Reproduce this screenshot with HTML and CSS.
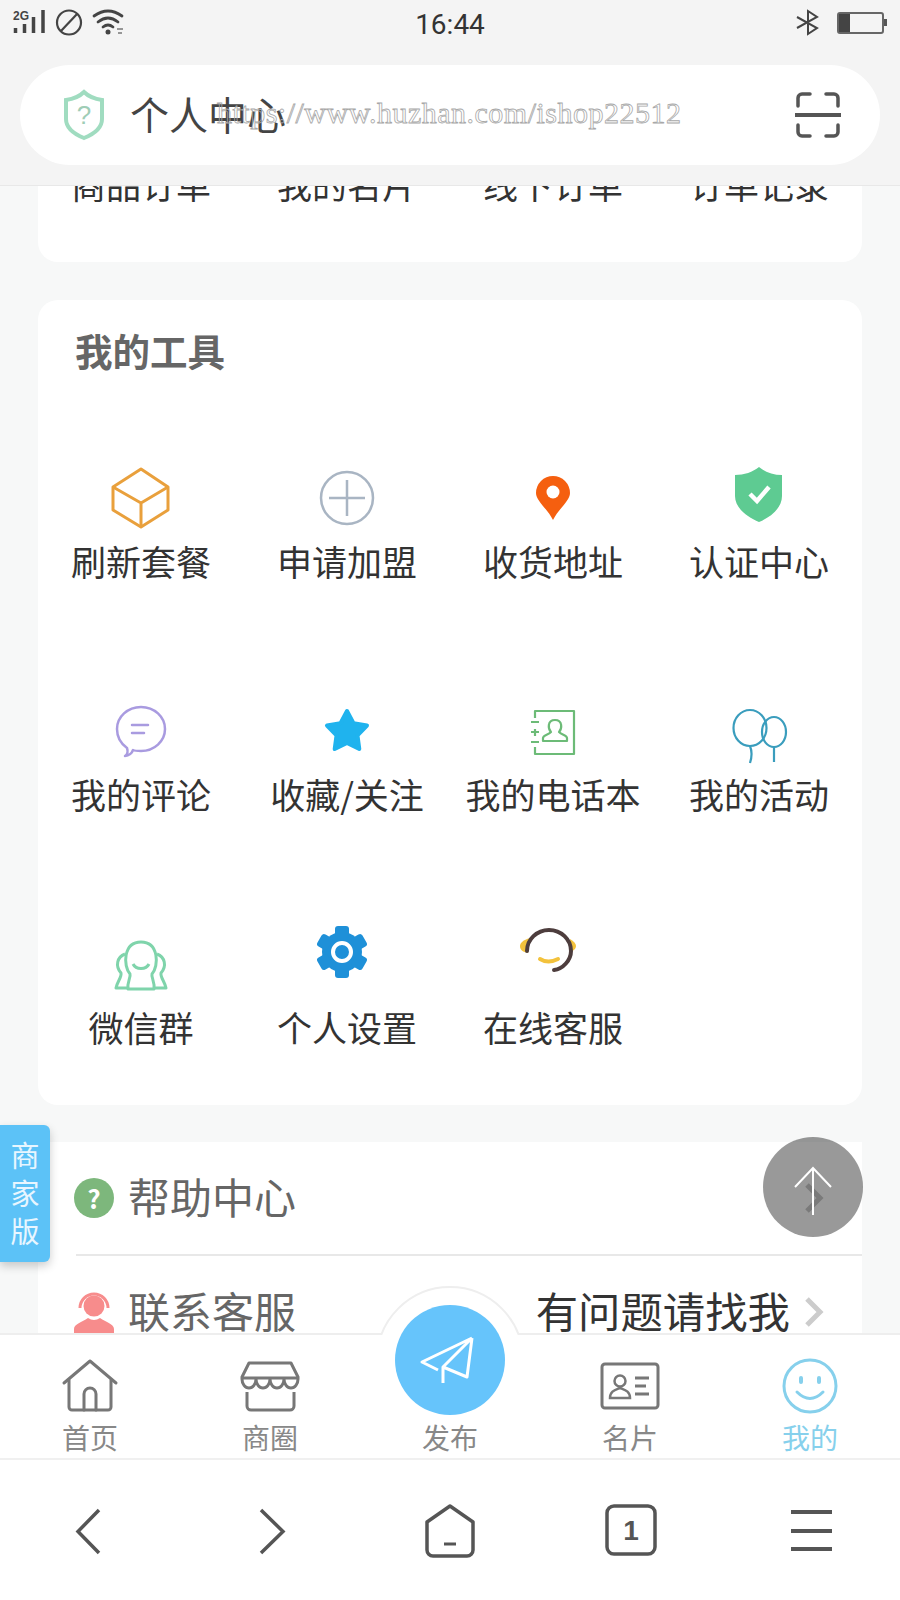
FILE: index.html
```html
<!DOCTYPE html>
<html lang="zh-CN">
<head>
    <meta charset="UTF-8">
    <meta name="viewport" content="width=device-width, initial-scale=1.0">
    <title>个人中心</title>
    <link rel="stylesheet" href="styles.css">
</head>
<body>
<div class="phone">

    <header class="topbar">
        <div class="status">
            <svg class="status-left" viewBox="0 0 130 50" fill="none" stroke="#444">
                <text x="13" y="20" class="net">2G</text>
                <path d="M15.500 28V33M24.500 24V33M33.500 17V33M43 10V33" stroke-width="3.500"/>
                <circle cx="69" cy="22.500" r="12" stroke-width="2.200"/>
                <path d="M61 31L77 14" stroke-width="2.200"/>
                <path d="M94 16Q108 6 122 16M98 22Q108 14 118 22M103 27Q108 23 113 27" stroke-width="2.800" stroke-linecap="round"/>
                <circle cx="108" cy="32" r="2.500" fill="#444" stroke="none"/>
                <path d="M117 29H123M118 33H122" stroke-width="1.500" stroke="#777"/>
            </svg>
            <span class="time">16:44</span>
            <svg class="status-right" viewBox="0 0 110 50" fill="none" stroke="#444">
                <path d="M7 17L27 28L18 34V11L27 17L7 28" stroke-width="2"/>
                <rect x="48" y="13" width="45" height="20" rx="2" stroke-width="2" stroke="#666"/>
                <rect x="49" y="14" width="11" height="18" fill="#444" stroke="none"/>
                <rect x="94" y="19" width="3" height="7" fill="#555" stroke="none"/>
            </svg>
        </div>
        <div class="address">
            <svg class="address-shield" viewBox="0 0 46 56" fill="none">
                <path d="M24 5C29 10 35 12 42 13V32C42 41 34 47 24 51C14 47 6 41 6 32V13C13 12 19 10 24 5Z" stroke="#a0dcc0" stroke-width="4"/>
                <text x="24" y="37" class="shield-mark">?</text>
            </svg>
            <span class="address-title">个人中心</span>
            <svg class="address-scan" viewBox="0 0 46 46" fill="none" stroke="#555" stroke-width="3.500" stroke-linecap="round">
                <path d="M3 14V6A4 4 0 0 1 7 2H15M31 2H39A4 4 0 0 1 43 6V14"/>
                <path d="M0 23H46" stroke-width="4"/>
                <path d="M3 33V40A4 4 0 0 0 7 44H15M31 44H39A4 4 0 0 0 43 40V33"/>
            </svg>
        </div>
        <div class="watermark">https://www.huzhan.com/ishop22512</div>
    </header>

    <main class="content">
        <section class="card orders">
            <div class="label">商品订单</div>
            <div class="label">我的名片</div>
            <div class="label">线下订单</div>
            <div class="label">订单记录</div>
        </section>

        <section class="card tools">
            <h2>我的工具</h2>
            <div class="tool-grid">
                <div class="tool">
                    <svg viewBox="0 0 80 80" fill="none" stroke="#e9a03c" stroke-width="3" stroke-linejoin="round">
                        <path d="M40 11L67 29V52L40 69L12 52V29Z"/>
                        <path d="M12 29L40 45L67 29M40 45V69"/>
                    </svg>
                    <div class="label">刷新套餐</div>
                </div>
                <div class="tool">
                    <svg viewBox="0 0 80 80" fill="none" stroke="#a9b5c3" stroke-width="2.500">
                        <circle cx="40" cy="40" r="26"/>
                        <path d="M22 40H58M40 22V58"/>
                    </svg>
                    <div class="label">申请加盟</div>
                </div>
                <div class="tool">
                    <svg viewBox="0 0 80 80">
                        <path d="M40 62C34 50 23 43 23 35A17 17 0 0 1 57 35C57 43 46 50 40 62Z" fill="#f55f0f"/>
                        <circle cx="40" cy="34" r="6.500" fill="#fff"/>
                    </svg>
                    <div class="label">收货地址</div>
                </div>
                <div class="tool">
                    <svg viewBox="0 0 80 80">
                        <path d="M40 9C46 14 54 17 63 17V38C63 50 52 59 40 64C28 59 16 50 16 38V17C25 17 34 14 40 9Z" fill="#5ecb92"/>
                        <path d="M31 36L38 43L50 29" fill="none" stroke="#fff" stroke-width="4.500"/>
                    </svg>
                    <div class="label">认证中心</div>
                </div>

                <div class="tool">
                    <svg viewBox="0 0 80 80" fill="none" stroke="#a99be0" stroke-width="2.500" stroke-linecap="round" stroke-linejoin="round">
                        <path d="M24 65C27 63 27 60 26 57C19 52 16 46 16 38A24 22 0 0 1 64 38A24 22 0 0 1 40 60C36 60 34 60 32 59C31 62 28 65 24 65Z"/>
                        <path d="M31 34H47M31 42H43"/>
                    </svg>
                    <div class="label">我的评论</div>
                </div>
                <div class="tool">
                    <svg viewBox="0 0 80 80">
                        <path d="M40 20L46.500 32.100L60 34.500L50.500 44.400L52.300 58L40 52L27.700 58L29.500 44.400L20 34.500L33.500 32.100Z" fill="#1fb3ee" stroke="#1fb3ee" stroke-width="4" stroke-linejoin="round"/>
                    </svg>
                    <div class="label">收藏/关注</div>
                </div>
                <div class="tool">
                    <svg viewBox="0 0 80 80" fill="none" stroke="#6cbb77" stroke-width="2.200" stroke-linejoin="round">
                        <path d="M22 27V20H61V63H22V56M22 45V38"/>
                        <path d="M18 31H26M18 41H26M18 51H26"/>
                        <path d="M30 50V47C30 44 35 44 38 41C35 38 34 29 42 29C50 29 49 38 46 41C49 44 54 44 54 47V50Z"/>
                    </svg>
                    <div class="label">我的电话本</div>
                </div>
                <div class="tool">
                    <svg viewBox="0 0 80 80" fill="none" stroke="#3a9dbd" stroke-width="2.200">
                        <ellipse cx="31" cy="37" rx="16.500" ry="18"/>
                        <ellipse cx="55" cy="41" rx="12" ry="15"/>
                        <path d="M31 55C33 60 33 66 31 72M55 56V71"/>
                    </svg>
                    <div class="label">我的活动</div>
                </div>

                <div class="tool">
                    <svg viewBox="0 0 80 80" fill="none" stroke="#7fd4ab" stroke-width="3" stroke-linejoin="round">
                        <path d="M27 65H53C54 58 50 53 51 50C58 42 58 18 40 18C22 18 22 42 29 50C30 53 26 58 27 65Z"/>
                        <path d="M24 30C16 33 14 42 20 49C21 53 16 58 15 64H27M56 30C64 33 66 42 60 49C59 53 64 58 65 64H53"/>
                        <path d="M32 40C35 46 45 46 48 40"/>
                    </svg>
                    <div class="label">微信群</div>
                </div>
                <div class="tool">
                    <svg viewBox="0 0 80 80">
                        <g transform="translate(35 28)" fill="#1e90d8">
                            <circle r="20"/>
                            <rect x="-7" y="-26" width="14" height="12" rx="3"/>
                            <rect x="-7" y="-26" width="14" height="12" rx="3" transform="rotate(60)"/>
                            <rect x="-7" y="-26" width="14" height="12" rx="3" transform="rotate(120)"/>
                            <rect x="-7" y="-26" width="14" height="12" rx="3" transform="rotate(180)"/>
                            <rect x="-7" y="-26" width="14" height="12" rx="3" transform="rotate(240)"/>
                            <rect x="-7" y="-26" width="14" height="12" rx="3" transform="rotate(300)"/>
                            <circle r="9" stroke="#fff" stroke-width="4"/>
                        </g>
                    </svg>
                    <div class="label">个人设置</div>
                </div>
                <div class="tool">
                    <svg viewBox="0 0 80 80" fill="none" stroke-linecap="round">
                        <path d="M17 14C10 16 7 19 7 22C7 26 10 28 15 29Z" fill="#f3c23c"/>
                        <path d="M57 15C61 17 63 20 63 22C63 25 60 27 57 28Z" fill="#f3c23c"/>
                        <path d="M27 35Q35 40 45 35" stroke="#f3c23c" stroke-width="4"/>
                        <path d="M14 27A22 21 0 0 1 58 27C58 36 50 45 41 46" stroke="#4d3d3d" stroke-width="4"/>
                    </svg>
                    <div class="label">在线客服</div>
                </div>
            </div>
        </section>

        <section class="card links">
            <div class="link-row">
                <span class="help-icon">?</span>
                <span class="link-name">帮助中心</span>
                <svg class="chevron" viewBox="0 0 20 32" fill="none"><path d="M3 3L16 16L3 29" stroke="#ccc" stroke-width="5"/></svg>
            </div>
            <div class="link-row">
                <svg class="service-icon" viewBox="0 0 40 44" fill="#f78c8c">
                    <circle cx="20" cy="15" r="10.500"/>
                    <path d="M6 17A14 14 0 0 1 34 17" fill="none" stroke="#f78c8c" stroke-width="3"/>
                    <path d="M0 44V38C0 33 8 31 14 27Q20 31 26 27C32 31 40 33 40 38V44Z"/>
                </svg>
                <span class="link-name">联系客服</span>
                <span class="link-note">有问题请找我</span>
                <svg class="chevron" viewBox="0 0 20 32" fill="none"><path d="M3 3L16 16L3 29" stroke="#ccc" stroke-width="5"/></svg>
            </div>
        </section>

        <div class="merchant">商<br>家<br>版</div>
        <div class="to-top">
            <svg viewBox="0 0 100 100" fill="none" stroke="#fff" stroke-width="2"><path d="M50 31V78M32 50L50 31L68 50"/></svg>
        </div>
    </main>

    <nav class="tabbar">
        <div class="fab-halo"></div>
        <div class="fab">
            <svg viewBox="0 0 110 110" fill="none" stroke="#fff" stroke-width="3" stroke-linejoin="round">
                <path d="M77 33L27 57L43 65M77 33L72 72L48 62M77 33L48 62V78"/>
            </svg>
        </div>
        <div class="tab">
            <svg viewBox="0 0 60 56" fill="none" stroke="#777" stroke-width="3" stroke-linecap="round" stroke-linejoin="round">
                <path d="M4 25L30 3L56 25"/>
                <path d="M9 22V49A3 3 0 0 0 12 52H48A3 3 0 0 0 51 49V22"/>
                <path d="M24 52V36A6 6 0 0 1 36 36V52"/>
            </svg>
            <span>首页</span>
        </div>
        <div class="tab">
            <svg viewBox="0 0 60 56" fill="none" stroke="#777" stroke-width="3" stroke-linejoin="round">
                <path d="M9 5H51L58 19V21A7 9 0 0 1 44 21A7 9 0 0 1 30 21A7 9 0 0 1 16 21A7 9 0 0 1 2 21V19Z"/>
                <path d="M2 20H58"/>
                <path d="M7 34V48A4 4 0 0 0 11 52H50A4 4 0 0 0 54 48V34"/>
            </svg>
            <span>商圈</span>
        </div>
        <div class="tab">
            <div class="tab-gap"></div>
            <span>发布</span>
        </div>
        <div class="tab">
            <svg viewBox="0 0 60 56" fill="none" stroke="#777" stroke-width="3">
                <rect x="2" y="6" width="56" height="44" rx="3"/>
                <circle cx="20" cy="23" r="5.500" stroke-width="2.500"/>
                <path d="M10 40C10 33 15 32 20 30C25 32 30 33 30 40Z" stroke-width="2.500"/>
                <path d="M35 20H49M35 28H46M35 36H49"/>
            </svg>
            <span>名片</span>
        </div>
        <div class="tab active">
            <svg viewBox="0 0 60 56" fill="none" stroke="#86d0ec" stroke-width="3" stroke-linecap="round">
                <circle cx="30" cy="28" r="26"/>
                <path d="M17 34Q30 47 43 34"/>
                <path d="M21 20V24M39 20V24" stroke-width="4"/>
            </svg>
            <span>我的</span>
        </div>
    </nav>

    <footer class="browserbar">
        <svg viewBox="0 0 60 60" fill="none" stroke="#555" stroke-width="3.500"><path d="M39 10L18 31.500L39 53"/></svg>
        <svg viewBox="0 0 60 60" fill="none" stroke="#555" stroke-width="3.500"><path d="M21 10L43 31.500L21 53"/></svg>
        <svg viewBox="0 0 60 60" fill="none" stroke="#555" stroke-width="3.500" stroke-linejoin="round">
            <path d="M30 6L53 22V50A6 6 0 0 1 47 56H13A6 6 0 0 1 7 50V22Z"/>
            <path d="M24 44H36" stroke-width="3"/>
        </svg>
        <svg viewBox="0 0 60 60" fill="none" stroke="#555" stroke-width="3.500">
            <rect x="7" y="6" width="48" height="48" rx="7"/>
            <text x="31" y="40" class="tab-count">1</text>
        </svg>
        <svg viewBox="0 0 60 60" fill="none" stroke="#555" stroke-width="4"><path d="M11 12H52M11 31H52M11 49H52"/></svg>
    </footer>

</div>
</body>
</html>
```

FILE: styles.css
```css
body {
    margin: 0;
    background-color: #f7f8f8;
    font-family: "Noto Sans CJK SC", "Noto Sans", sans-serif;
    color: #333;
}

.phone {
    width: 900px;
    height: 1600px;
    display: flex;
    flex-direction: column;
    overflow: hidden;
}

/* top */
.topbar {
    position: relative;
    height: 186px;
    box-sizing: border-box;
    background-color: #f4f4f4;
    border-bottom: 1px solid #e8e8e8;
    flex-shrink: 0;
}

.status {
    height: 50px;
    display: grid;
    grid-template-columns: 1fr auto 1fr;
    align-items: center;
}

.status-left {
    width: 130px;
    height: 50px;
}

.status-right {
    width: 110px;
    height: 50px;
    justify-self: end;
}

.net {
    font-family: "Liberation Sans", sans-serif;
    font-size: 12px;
    font-weight: 700;
    fill: #444;
    stroke: none;
}

.time {
    font-family: Roboto, sans-serif;
    font-size: 28px;
    line-height: 50px;
    color: #333;
}

.address {
    margin: 15px 20px 0;
    height: 100px;
    background-color: #fff;
    border-radius: 50px;
    display: flex;
    align-items: center;
    padding: 0 39px 0 40px;
}

.address-shield {
    width: 46px;
    height: 56px;
    margin-right: 24px;
}

.shield-mark {
    font-family: "Liberation Sans", sans-serif;
    font-size: 26px;
    fill: #9fcdb6;
    text-anchor: middle;
}

.address-title {
    font-size: 39px;
    line-height: 50px;
    color: #444;
    flex-grow: 1;
    margin-bottom: 4px;
}

.address-scan {
    width: 46px;
    height: 46px;
}

.watermark {
    position: absolute;
    left: 217px;
    top: 95px;
    font-family: "Liberation Serif", serif;
    font-size: 30px;
    letter-spacing: 0.5px;
    line-height: 36px;
    color: transparent;
    -webkit-text-stroke: 0.8px #a8a8a8;
    pointer-events: none;
}

/* scrolled content */
.content {
    position: relative;
    flex: 1;
    min-height: 0;
    overflow: hidden;
    padding: 0 38px;
}

.card {
    background-color: #fff;
    border-radius: 20px;
}

.label {
    font-size: 35px;
    line-height: 50px;
    text-align: center;
    color: #333;
    white-space: nowrap;
}

.orders {
    display: grid;
    grid-template-columns: repeat(4, 206px);
    margin-top: -27px;
    padding-bottom: 53px;
}

.tools {
    margin-top: 38px;
    padding: 25px 0 53px;
}

.tools h2 {
    margin: 0 0 83px 37px;
    font-size: 37.500px;
    line-height: 50px;
    font-weight: 700;
    color: #666;
}

.tool-grid {
    display: grid;
    grid-template-columns: repeat(4, 206px);
    row-gap: 105px;
}

.tool {
    display: flex;
    flex-direction: column;
    align-items: center;
}

.tool svg {
    width: 80px;
    height: 80px;
    display: block;
    margin-bottom: -2px;
}

.links {
    margin-top: 37px;
    border-radius: 0;
    padding-left: 38px;
}

.link-row {
    height: 114px;
    box-sizing: border-box;
    display: flex;
    align-items: center;
    gap: 14px;
    padding-right: 38px;
    border-bottom: 2px solid #e8e8e8;
}

.help-icon {
    width: 40px;
    height: 40px;
    margin-left: -2px;
    border-radius: 50%;
    background-color: #7db77c;
    color: #fff;
    font-size: 26px;
    font-weight: 700;
    line-height: 40px;
    text-align: center;
}

.service-icon {
    width: 40px;
    height: 44px;
    margin: 2px 0 0 -2px;
}

.link-name {
    font-size: 42px;
    line-height: 50px;
    color: #666;
    flex-grow: 1;
    margin-bottom: 4px;
}

.link-note {
    font-size: 42.400px;
    line-height: 50px;
    color: #333;
    margin-bottom: 4px;
}

.chevron {
    width: 20px;
    height: 32px;
}

.merchant {
    position: absolute;
    left: 0;
    top: 939px;
    width: 50px;
    height: 137px;
    box-sizing: border-box;
    padding-top: 10px;
    background-color: #5cc2f7;
    border-radius: 0 6px 6px 0;
    box-shadow: 0 4px 10px rgba(0, 0, 0, 0.2);
    color: #e8f6ff;
    font-size: 29px;
    line-height: 38px;
    text-align: center;
}

.to-top {
    position: absolute;
    left: 763px;
    top: 951px;
    width: 100px;
    height: 100px;
    border-radius: 50%;
    background-color: rgba(0, 0, 0, 0.4);
}

.to-top svg {
    display: block;
}

/* tab bar */
.tabbar {
    position: relative;
    height: 127px;
    box-sizing: border-box;
    flex-shrink: 0;
    background-color: #fff;
    border-top: 2px solid #eee;
    border-bottom: 2px solid #f0f0f0;
    display: grid;
    grid-template-columns: repeat(5, 180px);
}

.fab-halo {
    position: absolute;
    left: 376px;
    top: -49px;
    width: 148px;
    height: 49px;
    overflow: hidden;
}

.fab-halo::before {
    content: "";
    display: block;
    width: 148px;
    height: 148px;
    box-sizing: border-box;
    border: 2px solid #eee;
    border-radius: 50%;
    background-color: #fff;
}

.fab {
    position: absolute;
    left: 395px;
    top: -30px;
    width: 110px;
    height: 110px;
    border-radius: 50%;
    background-color: #66c4fb;
}

.tab {
    display: flex;
    flex-direction: column;
    align-items: center;
    padding-top: 23px;
    font-size: 28px;
    line-height: 36px;
    color: #888;
}

.tab svg {
    width: 60px;
    height: 56px;
    margin-bottom: 5px;
}

.tab-gap {
    height: 61px;
}

.tab.active {
    color: #86d0ec;
}

/* browser bar */
.browserbar {
    height: 140px;
    flex-shrink: 0;
    background-color: #fff;
    display: grid;
    grid-template-columns: repeat(5, 180px);
    justify-items: center;
    align-items: center;
}

.browserbar svg {
    width: 60px;
    height: 60px;
}

.tab-count {
    font-family: "Liberation Sans", sans-serif;
    font-size: 28px;
    font-weight: 700;
    fill: #555;
    stroke: none;
    text-anchor: middle;
}
```
